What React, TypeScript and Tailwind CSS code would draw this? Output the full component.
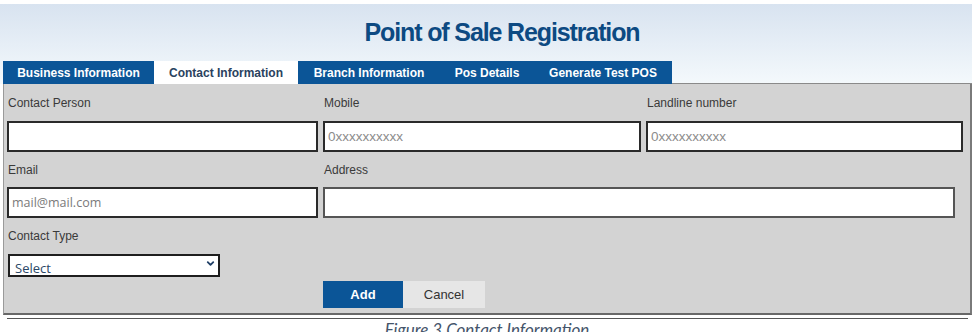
import { ChevronDown } from "lucide-react";

const tabs = [
  { label: "Business Information", w: "w-[151px]", active: false },
  { label: "Contact Information", w: "w-[144px]", active: true },
  { label: "Branch Information", w: "w-[142px]", active: false },
  { label: "Pos Details", w: "w-[94px]", active: false },
  { label: "Generate Test POS", w: "w-[138px]", active: false },
];

export default function App() {
  return (
    <div className="w-[977px] h-[332px] overflow-hidden bg-white font-['Liberation_Sans',Arial,sans-serif]">
      <div className="w-[972px] pt-1">
        {/* header */}
        <div className="bg-gradient-to-b from-[#d8e3f0] to-[#f4f9fc]">
          <h1 className="h-[57px] flex items-center justify-center pl-[32px] pt-[1px] text-[25px] font-bold tracking-[-0.045em] text-[#0d4a82]">
            Point of Sale Registration
          </h1>
          <div className="flex h-[23px] pl-[3px]">
            {tabs.map((t) => (
              <div
                key={t.label}
                className={`${t.w} flex items-center justify-center text-[12px] font-bold ${
                  t.active ? "bg-white text-[#2a425e]" : "bg-[#0b5597] text-white"
                }`}
              >
                {t.label}
              </div>
            ))}
            <div className="flex-1 border-b border-[#8a8a8a]" />
          </div>
        </div>

        {/* panel */}
        <div className="ml-[3px] bg-[#d3d3d3] border-l border-l-[#9a9a9a] border-r-2 border-r-[#7a7a7a] border-b-2 border-b-[#686868] pl-[3px] pb-[5px] text-[12px] text-[#3a3a3a]">
          <div className="grid grid-cols-[311px_318px_317px] gap-x-[5px]">
            <div>
              <div className="h-[37px] flex items-center pl-px">Contact Person</div>
              <input className="w-full h-[31px] bg-white border-2 border-[#2a2a2a] outline-none" />
            </div>
            <div>
              <div className="h-[37px] flex items-center pl-px">Mobile</div>
              <input
                placeholder="0xxxxxxxxxx"
                className="w-full h-[31px] bg-white border-2 border-[#2a2a2a] px-[3px] text-[13.5px] placeholder:text-[#8c8c8c] outline-none"
              />
            </div>
            <div>
              <div className="h-[37px] flex items-center pl-px">Landline number</div>
              <input
                placeholder="0xxxxxxxxxx"
                className="w-full h-[31px] bg-white border-2 border-[#2a2a2a] px-[3px] text-[13.5px] placeholder:text-[#8c8c8c] outline-none"
              />
            </div>
          </div>

          <div className="grid grid-cols-[311px_632px] gap-x-[5px]">
            <div>
              <div className="h-[35px] flex items-center pl-px">Email</div>
              <input
                placeholder="mail@mail.com"
                className="w-full h-[31px] bg-white border-2 border-[#2a2a2a] px-[3px] font-['Open_Sans',sans-serif] text-[12.5px] placeholder:text-[#7a7a7a] outline-none"
              />
            </div>
            <div>
              <div className="h-[35px] flex items-center pl-px">Address</div>
              <input className="w-full h-[31px] bg-white border-2 border-[#555] outline-none" />
            </div>
          </div>

          <div className="h-[36px] flex items-center pl-px">Contact Type</div>
          <div className="relative w-[212px] h-[23px] ml-px">
            <select className="w-full h-full appearance-none bg-white border-2 border-[#1e1e1e] pl-[5px] pt-[3px] font-['Open_Sans',sans-serif] text-[13px] text-[#2b4766] outline-none">
              <option>Select</option>
            </select>
            <ChevronDown
              className="absolute right-[4px] top-[4px] w-[11px] h-[11px] text-[#1f3f66] pointer-events-none"
              strokeWidth={4}
            />
          </div>

          <div className="flex mt-1 ml-[316px] h-[27px] text-[13px]">
            <button className="w-[80px] bg-[#0b5597] text-white font-bold">Add</button>
            <button className="w-[82px] bg-[#e6e6e6] text-[#333]">Cancel</button>
          </div>
        </div>

        {/* bottom */}
        <div className="mt-[3px] ml-[7px] mr-[4px] border-t border-[#555]" />
        <div className="pt-[1px] text-center font-['Lato',sans-serif] italic text-[17px] leading-[20px] text-[#44546a] pl-[2px]">
          Figure 3 Contact Information
        </div>
      </div>
    </div>
  );
}
